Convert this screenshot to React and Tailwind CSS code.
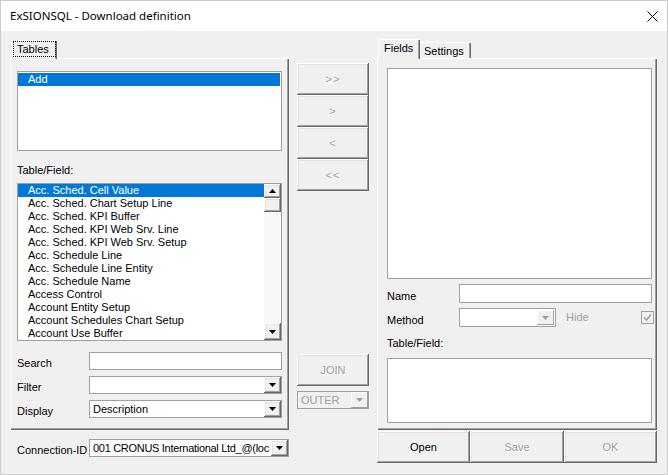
import React from "react";

const raised =
  "shadow-[inset_-1px_-1px_#696969,inset_1px_1px_#ffffff,inset_-2px_-2px_#a0a0a0,inset_2px_2px_#e3e3e3]";

const items = [
  "Acc. Sched. Cell Value",
  "Acc. Sched. Chart Setup Line",
  "Acc. Sched. KPI Buffer",
  "Acc. Sched. KPI Web Srv. Line",
  "Acc. Sched. KPI Web Srv. Setup",
  "Acc. Schedule Line",
  "Acc. Schedule Line Entity",
  "Acc. Schedule Name",
  "Access Control",
  "Account Entity Setup",
  "Account Schedules Chart Setup",
  "Account Use Buffer",
];

const Tri = ({ up = false, color = "#000" }) => (
  <svg width="7" height="4" viewBox="0 0 7 4">
    {up ? (
      <polygon points="0,4 7,4 3.5,0" fill={color} />
    ) : (
      <polygon points="0,0 7,0 3.5,4" fill={color} />
    )}
  </svg>
);

const ArrowBtn = ({ disabled = false, h = "h-full" }) => (
  <div
    className={`w-[17px] ${h} bg-[#f0f0f0] flex items-center justify-center ${
      disabled
        ? "shadow-[inset_-1px_-1px_#a0a0a0,inset_1px_1px_#ffffff]"
        : raised
    }`}
  >
    <Tri color={disabled ? "#a0a0a0" : "#000"} />
  </div>
);

const Combo = ({ text = "", w = "w-[193px]", disabled = false, bg = "bg-white", textClass = "" }) => (
  <div className={`${w} h-[18px] border border-[#a0a0a0] ${bg} flex`}>
    <div
      className={`flex-1 overflow-hidden whitespace-nowrap pl-[3px] leading-[16px] ${textClass} ${
        disabled ? "text-[#a0a0a0]" : ""
      }`}
    >
      {text}
    </div>
    <ArrowBtn disabled={disabled} />
  </div>
);

const Button = ({ children, className = "", disabled = true }) => (
  <div
    className={`bg-[#f0f0f0] flex items-center justify-center ${raised} ${className} ${
      disabled ? "text-[#a0a0a0] [text-shadow:1px_1px_0_#ffffff]" : "text-black"
    }`}
  >
    {children}
  </div>
);

const Panel = ({ children, className = "" }) => (
  <div
    className={`border-l border-t border-l-white border-t-white shadow-[inset_-1px_-1px_#696969,inset_-2px_-2px_#a0a0a0] ${className}`}
  >
    {children}
  </div>
);

export default function App() {
  return (
    <div className="w-[668px] h-[475px] bg-[#f0f0f0] border border-[#cccccc] flex flex-col overflow-hidden text-[11px] text-black font-['Liberation_Sans',Arial,sans-serif]">
      {/* title bar */}
      <div className="h-[30px] bg-white flex items-center justify-between pl-[9px] pr-[9px] shrink-0">
        <span className="text-[11.5px] font-['Noto_Sans','Liberation_Sans',sans-serif]">
          ExSIONSQL - Download definition
        </span>
        <svg width="11" height="11" viewBox="0 0 11 11">
          <path d="M0.5 0.5L10.5 10.5M10.5 0.5L0.5 10.5" stroke="#000" strokeWidth="1" />
        </svg>
      </div>

      <div className="flex pl-[9px]">
        {/* left column */}
        <div className="w-[279px] pt-[9px]">
          <div className="h-[18px] flex items-end pl-[2px]">
            <div className="relative z-10 h-[19px] -mb-px w-[45px] bg-[#f0f0f0] border-l border-t border-l-white border-t-white shadow-[inset_-1px_0_#696969,inset_-2px_0_#a0a0a0]">
              <div className="h-[16px] w-[43px] border border-dotted border-black leading-[14px] pl-[3px]">
                Tables
              </div>
            </div>
          </div>
          <Panel className="h-[372px] pl-[6px] pt-[12px]">
            <div className="w-[265px] h-[80px] bg-white border border-[#a0a0a0] pt-px pr-px">
              <div className="h-[13px] bg-[#0078d7] text-white leading-[13px] pl-[10px]">Add</div>
            </div>
            <div className="mt-[13px] h-[13px] leading-[13px]">Table/Field:</div>
            <div className="mt-[6px] w-[265px] h-[158px] bg-white border border-[#a0a0a0] flex">
              <div className="flex-1">
                {items.map((t, i) => (
                  <div
                    key={t}
                    className={`h-[13px] leading-[13px] pl-[10px] whitespace-nowrap ${
                      i === 0 ? "bg-[#0078d7] text-white" : ""
                    }`}
                  >
                    {t}
                  </div>
                ))}
              </div>
              <div className="w-[17px] flex flex-col bg-[#f5f5f5]">
                <div className={`h-[14px] flex items-center justify-center bg-[#f0f0f0] ${raised}`}>
                  <Tri up />
                </div>
                <div className={`h-[14px] bg-[#f0f0f0] ${raised}`} />
                <div className="flex-1 bg-[repeating-conic-gradient(#f0f0f0_0_25%,#ffffff_0_50%)] bg-[length:2px_2px]" />
                <div className={`h-[17px] flex items-center justify-center bg-[#f0f0f0] ${raised}`}>
                  <Tri />
                </div>
              </div>
            </div>
            <div className="mt-[11px] flex">
              <div className="w-[72px] pt-[5px] leading-[13px]">Search</div>
              <div className="w-[193px] h-[18px] bg-white border border-[#a0a0a0]" />
            </div>
            <div className="mt-[6px] flex">
              <div className="w-[72px] pt-[5px] leading-[13px]">Filter</div>
              <Combo />
            </div>
            <div className="mt-[6px] flex">
              <div className="w-[72px] pt-[5px] leading-[13px]">Display</div>
              <Combo text="Description" />
            </div>
          </Panel>
          <div className="mt-[9px] flex pl-[7px]">
            <div className="w-[72px] pt-[5px] leading-[13px]">Connection-ID</div>
            <Combo
              text="001 CRONUS International Ltd_@(loc"
              w="w-[200px]"
              textClass="tracking-[-0.3px] pl-[2px]"
            />
          </div>
        </div>

        {/* middle column */}
        <div className="w-[72px] ml-[8px] pt-[32px] flex flex-col">
          {[">>", ">", "<", "<<"].map((t) => (
            <Button key={t} className="h-[32px] tracking-[1px]">
              {t}
            </Button>
          ))}
          <Button className="h-[32px] mt-[163px]">JOIN</Button>
          <div className="mt-[5px]">
            <Combo text="OUTER" w="w-[72px]" disabled bg="bg-[#f0f0f0]" />
          </div>
        </div>

        {/* right column */}
        <div className="w-[280px] ml-[8px] pt-[8px]">
          <div className="h-[19px] flex items-end pl-[1px]">
            <div className="relative z-10 h-[20px] -mb-px w-[42px] bg-[#f0f0f0] border-l border-t border-l-white border-t-white shadow-[inset_-1px_0_#696969,inset_-2px_0_#a0a0a0] pl-[5px] pt-[2px] leading-[13px]">
              Fields
            </div>
            <div className="h-[16px] w-[51px] bg-[#f0f0f0] border-t border-t-white shadow-[inset_-1px_0_#696969,inset_-2px_0_#a0a0a0] pl-[4px] pt-[2px] leading-[13px]">
              Settings
            </div>
          </div>
          <Panel className="h-[372px] pl-[9px] pt-[9px]">
            <div className="w-[265px] h-[211px] bg-white border border-[#a0a0a0]" />
            <div className="mt-[5px] flex">
              <div className="w-[72px] pt-[6px] leading-[13px]">Name</div>
              <div className="w-[193px] h-[19px] bg-white border border-[#a0a0a0]" />
            </div>
            <div className="mt-[5px] flex items-start">
              <div className="w-[72px] pt-[6px] leading-[13px]">Method</div>
              <div className="w-[97px] h-[19px] border border-[#a0a0a0] bg-white flex justify-end pr-px py-px">
                <ArrowBtn disabled />
              </div>
              <div className="ml-[10px] pt-[3px] leading-[13px] text-[#a0a0a0]">Hide</div>
              <div className="ml-auto mr-[3px] mt-[3px] w-[13px] h-[13px] border border-[#a0a0a0] bg-[#f0f0f0] flex items-center justify-center">
                <svg width="9" height="9" viewBox="0 0 9 9">
                  <path d="M1 4.5L3.5 7L8 1.5" stroke="#a0a0a0" strokeWidth="1.6" fill="none" />
                </svg>
              </div>
            </div>
            <div className="mt-[10px] h-[13px] leading-[13px]">Table/Field:</div>
            <div className="mt-[8px] w-[265px] h-[65px] bg-white border border-[#a0a0a0]" />
          </Panel>
          <div className="mt-px flex">
            <Button disabled={false} className="w-[93px] h-[32px]">Open</Button>
            <Button className="w-[94px] h-[32px]">Save</Button>
            <Button className="w-[93px] h-[32px]">OK</Button>
          </div>
        </div>
      </div>
    </div>
  );
}
